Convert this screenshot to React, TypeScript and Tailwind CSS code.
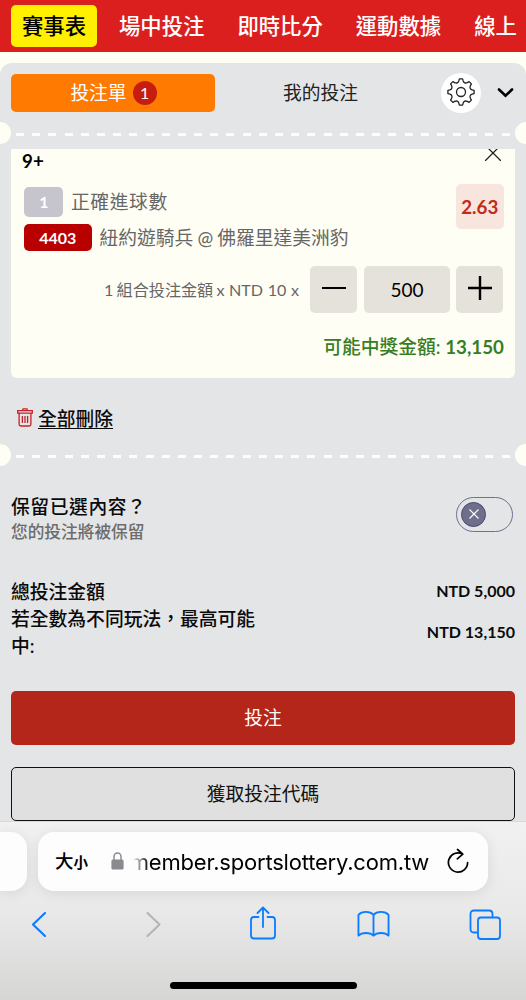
const NAV_ITEMS = ["賽事表", "場中投注", "即時比分", "運動數據", "線上"];

const DASHES = Array.from({ length: 31 }, (_, i) => i);

// point on the gear, angle in degrees
const gearPoint = (radius: number, angle: number) => {
  const rad = (angle * Math.PI) / 180;
  return `${(14 + radius * Math.sin(rad)).toFixed(2)} ${(14 - radius * Math.cos(rad)).toFixed(2)}`;
};

const GEAR_PATH =
  [0, 45, 90, 135, 180, 225, 270, 315]
    .map(
      (a, i) =>
        `${i === 0 ? "M" : "L"}${gearPoint(13.2, a - 7)}L${gearPoint(13.2, a + 7)}L${gearPoint(11.3, a + 11)}Q${gearPoint(8.8, a + 22.5)} ${gearPoint(11.3, a + 34)}`,
    )
    .join("") + "Z";

function TicketDivider() {
  return (
    <div className="flex h-[22px] items-center overflow-hidden">
      <span className="-ml-[11px] size-[22px] shrink-0 rounded-full bg-[#fffef5]" />
      <div className="mx-[5px] mt-[3px] flex flex-1 justify-between">
        {DASHES.map((dash) => (
          <span key={dash} className="h-[3px] w-2 bg-[#fffef5]" />
        ))}
      </div>
      <span className="-mr-[11px] size-[22px] shrink-0 rounded-full bg-[#fffef5]" />
    </div>
  );
}

function GearIcon() {
  return (
    <svg width="28" height="28" viewBox="0 0 28 28" fill="none" stroke="#222" strokeWidth="1.3" strokeLinejoin="round">
      <path d={GEAR_PATH} />
      <circle cx="14" cy="14" r="4.5" />
    </svg>
  );
}

function TrashIcon() {
  return (
    <svg className="mb-px" width="16" height="19" viewBox="0 0 16 19" fill="none" stroke="#c4222b" strokeWidth="1.3">
      <path d="M.7 2.7h14.600v2.400H.7zM5.300 2.700l.8-1.900h3.800l.8 1.900M2.100 5.100v11.200q0 1.700 1.700 1.700h8.400q1.700 0 1.700-1.700V5.100M5.400 8v7M8 8v7M10.600 8v7" />
    </svg>
  );
}

function BetSlipTabs() {
  return (
    <div className="flex h-[59px] items-center pl-[11px] pr-[12px] text-[18.75px]">
      <div className="flex h-[38px] w-[204px] items-center justify-center gap-[6px] rounded-[5px] bg-[#ff7a00] pl-px text-white">
        <span className="pt-px leading-none">投注單</span>
        <span className="flex size-[24px] items-center justify-center rounded-full bg-[#c61d10] text-[16px] leading-none">
          1
        </span>
      </div>
      <div className="flex-1 pr-[15px] pt-px text-center text-[#222]">我的投注</div>
      <div className="flex size-[40px] items-center justify-center rounded-full bg-white pb-[2px]">
        <GearIcon />
      </div>
      <svg className="ml-[16px] mt-px" width="17" height="10" viewBox="0 0 17 10" fill="none" stroke="#000" strokeWidth="2.6" strokeLinecap="round">
        <path d="M2 1.5 8.500 7.800 15 1.500" />
      </svg>
    </div>
  );
}

function BetCard() {
  return (
    <div className="mx-[11px] mt-[5px] h-[229px] overflow-hidden rounded-b-[6px] bg-[#fffef5] pl-[13px] pr-[11px]">
      <div className="flex h-[35px] items-start justify-between">
        <span className="-ml-[2px] mt-[1px] text-[18.75px] font-bold leading-[22px] text-black">9+</span>
        <svg className="-mt-[4px] mr-[3px]" width="16" height="16" viewBox="0 0 16 16" stroke="#222" strokeWidth="1.3">
          <path d="M0 0l16 16M16 0L0 16" />
        </svg>
      </div>

      <div className="flex items-start justify-between">
        <div className="flex flex-col gap-[7px] pt-[3px] text-[18.75px] text-[#666]">
          <div className="flex h-[30px] items-center gap-[8px]">
            <span className="flex h-[30px] w-[39px] items-center justify-center rounded-[5px] bg-[#c6c5ce] pl-px text-[16px] font-bold text-white">
              1
            </span>
            <span className="pt-px leading-none tracking-[0.6px]">正確進球數</span>
          </div>
          <div className="flex h-[27px] items-center gap-[8px]">
            <span className="flex h-[27px] w-[67.5px] items-center justify-center rounded-[5px] bg-[#b80000] text-[16px] font-bold text-white">
              4403
            </span>
            <span className="whitespace-nowrap pt-px leading-none [word-spacing:-0.6px]">紐約遊騎兵 @ 佛羅里達美洲豹</span>
          </div>
        </div>
        <div className="flex h-[44.5px] w-[48.5px] items-center justify-center rounded-[5px] bg-[#f8e6de] pt-[2px] text-[18.75px] font-bold text-[#c02b1d]">
          2.63
        </div>
      </div>

      <div className="mt-[15px] flex items-center justify-end pr-px">
        <span className="mr-[11px] whitespace-pre pt-px text-[16.1px] text-[#666]">
          <span className="[word-spacing:-0.9px]">1 組合投注金額 x</span>
          <span className="[word-spacing:0.5px]"> NTD 10 x</span>
        </span>
        <button className="mr-[7px] flex size-[47px] items-center justify-center rounded-[5px] bg-[#e5e2db]">
          <span className="mb-[3px] h-[2.4px] w-[24px] bg-black" />
        </button>
        <span className="mr-[6px] flex h-[47px] w-[86px] items-center justify-center rounded-[5px] bg-[#e5e2db] pt-[2px] text-[19px] text-black">
          500
        </span>
        <button className="flex size-[47px] items-center justify-center rounded-[5px] bg-[#e5e2db]">
          <svg className="mb-[3px]" width="24" height="24" viewBox="0 0 24 24" stroke="#000" strokeWidth="2.4">
            <path d="M0 12h24M12 0v24" />
          </svg>
        </button>
      </div>

      <p className="mt-[20px] text-right text-[18.75px] font-medium leading-[28px] text-[#377d22]">
        可能中獎金額: <span className="font-bold">13,150</span>
      </p>
    </div>
  );
}

function KeepSelection() {
  return (
    <div className="flex items-center justify-between pl-[11px] pr-[13.5px] pt-[28px]">
      <div>
        <p className="text-[18.75px] font-medium leading-[26px] tracking-[0.6px]">保留已選內容？</p>
        <p className="text-[16.7px] font-medium leading-[24px] text-[#6c6c6c]">您的投注將被保留</p>
      </div>
      <div className="mb-[10px] flex h-[35px] w-[56.5px] items-center rounded-full border border-[#706f91] pl-[4px]">
        <span className="flex size-[25px] items-center justify-center rounded-full border border-[#4a4970] bg-[#6f6e8b]">
          <svg width="10" height="10" viewBox="0 0 10 10" stroke="#fff" strokeWidth="1.1">
            <path d="M.5.5l9 9M9.500.5l-9 9" />
          </svg>
        </span>
      </div>
    </div>
  );
}

function Totals() {
  return (
    <div className="mt-[34px] px-[11px] text-[18.8px] font-medium leading-[27px]">
      <div className="flex items-center justify-between">
        <span>總投注金額</span>
        <span className="pb-[2px] text-[16px] font-bold leading-[25px]">NTD 5,000</span>
      </div>
      <div className="flex items-center justify-between">
        <span className="w-[252px]">若全數為不同玩法，最高可能中:</span>
        <span className="pb-[2px] text-[16px] font-bold leading-[25px]">NTD 13,150</span>
      </div>
    </div>
  );
}

function BrowserBar() {
  return (
    <div className="flex h-[179px] flex-col overflow-hidden border-t border-[#d9d9da] bg-linear-to-b from-[#f1f1f2] via-[#e9e9e9] to-[#d6d6d5] font-[Inter,'Noto_Sans_CJK_TC',sans-serif]">
      <div className="mt-[10px] flex h-[59px] gap-[11px]">
        <div className="w-[27px] rounded-r-[16px] bg-[#fdfdfd] shadow-[0_2px_14px_rgba(0,0,0,0.09)]" />
        <div className="flex w-[450px] items-center rounded-[16px] bg-[#fdfdfd] pl-[17px] shadow-[0_2px_14px_rgba(0,0,0,0.09)]">
          <span className="flex items-baseline font-medium leading-none text-black">
            <span className="text-[18.5px]">大</span>
            <span className="text-[14.5px] font-bold">小</span>
          </span>
          <svg className="ml-[23px] mb-px" width="13" height="18" viewBox="0 0 13 18">
            <path d="M3 8V4.500a3.500 3.500 0 0 1 7 0V8" fill="none" stroke="#8a8a8f" strokeWidth="1.5" />
            <rect x="0.4" y="7.5" width="12.2" height="10" rx="1.6" fill="#8a8a8f" />
          </svg>
          <div className="ml-[9px] flex w-[296px] justify-end overflow-hidden mask-[linear-gradient(to_right,transparent,black_16px)]">
            <span className="whitespace-nowrap text-[22px] leading-[30px] tracking-[-0.2px] text-black">
              member.sportslottery.com.tw
            </span>
          </div>
          <svg className="ml-[18px] mb-[2px]" width="22" height="26" viewBox="0 0 22 26" fill="none" stroke="#000" strokeWidth="1.7" strokeLinecap="round" strokeLinejoin="round">
            <path d="M20.6 14.500a9.600 9.600 0 1 1-5-8.400M10.500 1.500l5.300 4.700-5.500 4.600" />
          </svg>
        </div>
      </div>

      <div className="mt-[15px] flex h-[35px] items-center pl-[31px] text-[#0a7cff]">
        <svg width="16" height="26" viewBox="0 0 16 26" fill="none" stroke="currentColor" strokeWidth="2.1" strokeLinecap="round" strokeLinejoin="round">
          <path d="M14 2 2 13.500 14 25" />
        </svg>
        <svg className="ml-[98px]" width="16" height="26" viewBox="0 0 16 26" fill="none" stroke="#b5b5b6" strokeWidth="2.1" strokeLinecap="round" strokeLinejoin="round">
          <path d="M2.500 2l12 11.500-12 11.500" />
        </svg>
        <svg className="ml-[88px]" width="28" height="35" viewBox="0 0 28 35" fill="none" stroke="currentColor" strokeWidth="1.8" strokeLinecap="round" strokeLinejoin="round">
          <path d="M9.500 11H5q-3 0-3 3v15.500q0 3 3 3h18q3 0 3-3V14q0-3-3-3h-4.500M14 21V1.500M8.500 7 14 1.500 19.500 7" />
        </svg>
        <svg className="ml-[80px] mt-px" width="33" height="28" viewBox="0 0 34 28" fill="none" stroke="currentColor" strokeWidth="1.9" strokeLinecap="round" strokeLinejoin="round">
          <path d="M17 4.500C13.500.6 5 .6 1.500 4.500V26c3.500-3.600 12-3.600 15.500 0 3.500-3.600 12-3.600 15.500 0V4.500C29 .6 20.500.6 17 4.500zM17 4.500V26" />
        </svg>
        <svg className="ml-[79px] mt-px" width="32" height="31" viewBox="0 0 32 31" fill="none" stroke="currentColor" strokeWidth="1.8">
          <rect x="9" y="8.5" width="22" height="21.5" rx="3" />
          <path d="M9 23.500H5q-3.500 0-3.500-3.500V5q0-3.500 3.500-3.500h15q3.500 0 3.500 3.500v3.500" />
        </svg>
      </div>

      <div className="mx-auto mt-[41px] h-[7px] w-[187px] rounded-full bg-black" />
    </div>
  );
}

export default function App() {
  return (
    <div className="h-[1000px] w-[526px] overflow-hidden bg-[#fffef5] font-[Lato,'Noto_Sans_CJK_TC',sans-serif] text-[#0a0a0a]">
      <nav className="flex h-[52px] items-center overflow-hidden bg-[#db1f1f] pl-[11px]">
        {NAV_ITEMS.map((item, index) => (
          <span
            key={item}
            className={
              index === 0
                ? "mr-[11px] flex h-[42px] shrink-0 items-center rounded-[5px] bg-[#fff000] px-[11px] pt-px text-[21.35px] font-medium text-black"
                : "mr-[11px] flex h-[42px] shrink-0 items-center px-[11px] pt-px text-[21.35px] font-medium text-white"
            }
          >
            {item}
          </span>
        ))}
      </nav>

      <main className="mt-[11px] h-[758px] overflow-hidden rounded-t-[12px] bg-[#e4e5e7]">
        <BetSlipTabs />
        <TicketDivider />
        <BetCard />
        <div className="flex h-[66px] items-center gap-[5px] pl-[17px] pt-[14px]">
          <TrashIcon />
          <span className="pt-[2px] text-[18.75px] font-medium leading-none underline underline-offset-2">全部刪除</span>
        </div>
        <TicketDivider />
        <KeepSelection />
        <Totals />
        <div className="mt-[32px] flex flex-col gap-[22px] px-[11px] text-[18.75px]">
          <button className="h-[54px] rounded-[5px] bg-[#b4261a] text-white">投注</button>
          <button className="h-[54px] rounded-[5px] border border-[#111] bg-[#e0e0e0] text-[#111]">獲取投注代碼</button>
        </div>
      </main>

      <BrowserBar />
    </div>
  );
}
